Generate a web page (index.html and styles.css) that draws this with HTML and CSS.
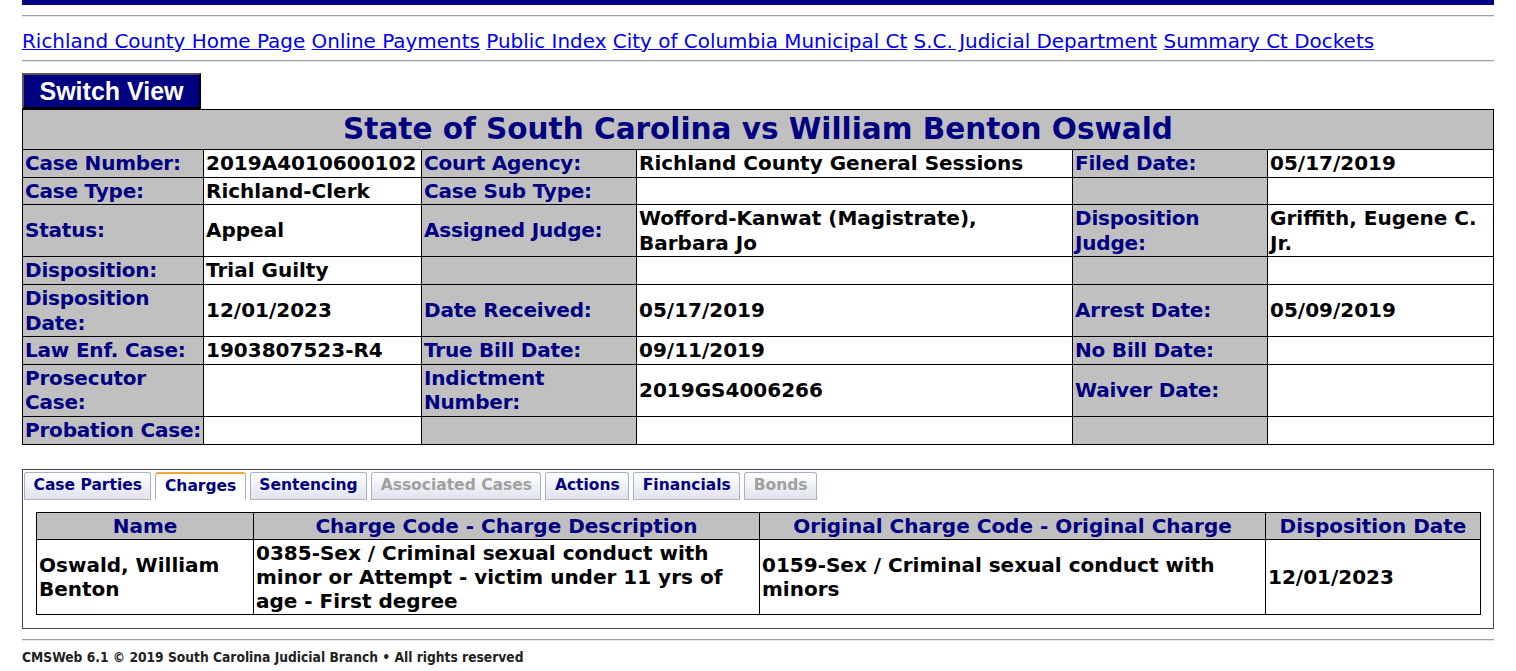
FILE: index.html
```html
<!DOCTYPE html>
<html lang="en">
<head>
    <meta charset="UTF-8">
    <title>Case Details</title>
    <link rel="stylesheet" href="styles.css">
</head>
<body>
    <div class="topbar"></div>
    <hr class="rule">
    <div class="links">
        <a href="#">Richland County Home Page</a>
        <a href="#">Online Payments</a>
        <a href="#">Public Index</a>
        <a href="#">City of Columbia Municipal Ct</a>
        <a href="#">S.C. Judicial Department</a>
        <a href="#">Summary Ct Dockets</a>
    </div>
    <hr class="rule">

    <button class="switch">Switch View</button>
    <table class="case">
        <colgroup>
            <col class="c1"><col class="c2"><col class="c3"><col class="c4"><col class="c5"><col class="c6">
        </colgroup>
        <tr>
            <td colspan="6" class="title">State of South Carolina vs William Benton Oswald</td>
        </tr>
        <tr>
            <td class="lbl">Case Number:</td><td>2019A4010600102</td>
            <td class="lbl">Court Agency:</td><td>Richland County General Sessions</td>
            <td class="lbl">Filed Date:</td><td>05/17/2019</td>
        </tr>
        <tr>
            <td class="lbl">Case Type:</td><td>Richland-Clerk</td>
            <td class="lbl">Case Sub Type:</td><td></td>
            <td class="lbl"></td><td></td>
        </tr>
        <tr>
            <td class="lbl">Status:</td><td>Appeal</td>
            <td class="lbl">Assigned Judge:</td><td>Wofford-Kanwat (Magistrate),<br>Barbara Jo</td>
            <td class="lbl">Disposition<br>Judge:</td><td>Griffith, Eugene C.<br>Jr.</td>
        </tr>
        <tr>
            <td class="lbl">Disposition:</td><td>Trial Guilty</td>
            <td class="lbl"></td><td></td>
            <td class="lbl"></td><td></td>
        </tr>
        <tr>
            <td class="lbl">Disposition<br>Date:</td><td>12/01/2023</td>
            <td class="lbl">Date Received:</td><td>05/17/2019</td>
            <td class="lbl">Arrest Date:</td><td>05/09/2019</td>
        </tr>
        <tr>
            <td class="lbl">Law Enf. Case:</td><td>1903807523-R4</td>
            <td class="lbl">True Bill Date:</td><td>09/11/2019</td>
            <td class="lbl">No Bill Date:</td><td></td>
        </tr>
        <tr>
            <td class="lbl">Prosecutor<br>Case:</td><td></td>
            <td class="lbl">Indictment<br>Number:</td><td>2019GS4006266</td>
            <td class="lbl">Waiver Date:</td><td></td>
        </tr>
        <tr>
            <td class="lbl">Probation Case:</td><td></td>
            <td class="lbl"></td><td></td>
            <td class="lbl"></td><td></td>
        </tr>
    </table>

    <div class="tabbox">
        <ul class="tabs">
            <li><a href="#">Case Parties</a></li>
            <li class="active"><a href="#">Charges</a></li>
            <li><a href="#">Sentencing</a></li>
            <li class="disabled"><a href="#">Associated Cases</a></li>
            <li><a href="#">Actions</a></li>
            <li><a href="#">Financials</a></li>
            <li class="disabled"><a href="#">Bonds</a></li>
        </ul>
        <div class="panel">
            <table class="charges">
                <colgroup>
                    <col class="d1"><col class="d2"><col class="d3"><col class="d4">
                </colgroup>
                <tr>
                    <th>Name</th>
                    <th>Charge Code - Charge Description</th>
                    <th>Original Charge Code - Original Charge</th>
                    <th>Disposition Date</th>
                </tr>
                <tr>
                    <td>Oswald, William Benton</td>
                    <td>0385-Sex / Criminal sexual conduct with minor or Attempt - victim under 11 yrs of age - First degree</td>
                    <td>0159-Sex / Criminal sexual conduct with minors</td>
                    <td>12/01/2023</td>
                </tr>
            </table>
        </div>
    </div>

    <hr class="rule footrule">
    <div class="footer">CMSWeb 6.1 &copy; 2019 South Carolina Judicial Branch &bull; All rights reserved</div>
</body>
</html>
```

FILE: styles.css
```css
body {
    margin: 0 22px;
    font-family: "DejaVu Sans", Verdana, sans-serif;
    background-color: #fff;
    color: #000;
}

.topbar {
    height: 5px;
    background-color: #000080;
}

.rule {
    margin: 10px 0 0 0;
    border: none;
    border-top: 1px solid #a0a0a0;
    border-bottom: 1px solid #e8e8e8;
    height: 0;
}

.links {
    margin-top: 12px;
    font-size: 19.95px;
    line-height: 24px;
}

.links a {
    color: #0000ee;
}

.links + .rule {
    margin-top: 7px;
}

.switch {
    display: block;
    margin-top: 11px;
    width: 179px;
    height: 36px;
    padding: 0;
    background-color: #000080;
    color: #fff;
    font-family: "Liberation Sans", Arial, sans-serif;
    font-weight: bold;
    font-size: 25px;
    border: 2px solid;
    border-color: #555 #000 #000 #555;
    cursor: pointer;
}

table {
    border-collapse: collapse;
}

.case {
    width: 100%;
    table-layout: fixed;
    border: 1px solid #000;
    font-size: 20px;
    font-weight: bold;
    line-height: 24.6px;
}

.case td {
    border: 1px solid #000;
    padding: 1px 2px;
    vertical-align: middle;
}

.c1 { width: 181px; }
.c2 { width: 218px; }
.c3 { width: 215px; }
.c4 { width: 436px; }
.c5 { width: 195px; }

.case .title {
    height: 39px;
    background-color: #c0c0c0;
    color: #000080;
    font-size: 29.5px;
    text-align: center;
    padding: 0;
}

.case .lbl {
    background-color: #c0c0c0;
    color: #000080;
    white-space: nowrap;
    letter-spacing: -0.2px;
}

.tabbox {
    margin-top: 24px;
    border: 1px solid #444;
    padding: 2px 0 0 1px;
}

.tabs {
    list-style: none;
    margin: 0;
    padding: 0;
    display: flex;
    gap: 4px;
}

.tabs li {
    height: 26px;
    border: 1px solid #a9b0c6;
    border-bottom: 1px solid #b8b8b8;
    border-radius: 3px 3px 0 0;
    background: linear-gradient(#ffffff, #dfe3ef);
}

.tabs a {
    display: block;
    padding: 0 8.5px;
    font-size: 15.5px;
    font-weight: bold;
    line-height: 25px;
    color: #000080;
    text-decoration: none;
}

.tabs .active {
    background: #fff;
    border-top: 2px solid #f3a53a;
    border-bottom-color: #fff;
    height: 25px;
}

.tabs .disabled a {
    color: #a0a0a0;
}

.panel {
    padding: 12px 12px 13px 12px;
}

.charges {
    width: 100%;
    table-layout: fixed;
    border: 1px solid #000;
    font-size: 20px;
    font-weight: bold;
    line-height: 24px;
}

.charges th {
    background-color: #c0c0c0;
    color: #000080;
    border: 1px solid #000;
    padding: 1px 2px;
}

.charges td {
    border: 1px solid #000;
    padding: 1px 2px;
    vertical-align: middle;
}

.d1 { width: 217px; }
.d2 { width: 506px; }
.d3 { width: 506px; }

.footrule {
    margin-top: 10px;
}

.footer {
    margin-top: 8px;
    font-family: "DejaVu Sans Condensed", "DejaVu Sans", sans-serif;
    font-size: 13.7px;
    font-weight: bold;
    color: #222;
}
```
